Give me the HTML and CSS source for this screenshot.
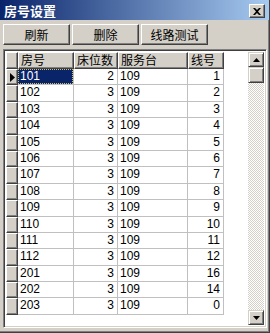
FILE: index.html
```html
<!DOCTYPE html>
<html>
<head>
<meta charset="utf-8">
<link rel="stylesheet" href="styles.css">
</head>
<body>
<div class="window">
  <div class="titlebar">
    <span class="title">房号设置</span>
    <span class="close">
      <svg width="8" height="7" viewBox="0 0 8 7"><path d="M0 0h2l2 2 2-2h2L5 3.5 8 7H6L4 5 2 7H0l3-3.5z" fill="#000"/></svg>
    </span>
  </div>
  <div class="toolbar">
    <div class="btn">刷新</div>
    <div class="btn">删除</div>
    <div class="btn">线路测试</div>
  </div>
  <div class="frame">
    <div class="grid">
      <div class="row head">
        <div class="ind"></div>
        <div class="hc">房号</div>
        <div class="hc">床位数</div>
        <div class="hc">服务台</div>
        <div class="hc">线号</div>
      </div>
      <div class="row"><div class="ind"><svg width="5" height="9" viewBox="0 0 5 9"><path d="M0 0l5 4.5L0 9z" fill="#000"/></svg></div><div class="c sel"><span>101</span></div><div class="c r">2</div><div class="c">109</div><div class="c r">1</div></div>
      <div class="row"><div class="ind"></div><div class="c">102</div><div class="c r">3</div><div class="c">109</div><div class="c r">2</div></div>
      <div class="row"><div class="ind"></div><div class="c">103</div><div class="c r">3</div><div class="c">109</div><div class="c r">3</div></div>
      <div class="row"><div class="ind"></div><div class="c">104</div><div class="c r">3</div><div class="c">109</div><div class="c r">4</div></div>
      <div class="row"><div class="ind"></div><div class="c">105</div><div class="c r">3</div><div class="c">109</div><div class="c r">5</div></div>
      <div class="row"><div class="ind"></div><div class="c">106</div><div class="c r">3</div><div class="c">109</div><div class="c r">6</div></div>
      <div class="row"><div class="ind"></div><div class="c">107</div><div class="c r">3</div><div class="c">109</div><div class="c r">7</div></div>
      <div class="row"><div class="ind"></div><div class="c">108</div><div class="c r">3</div><div class="c">109</div><div class="c r">8</div></div>
      <div class="row"><div class="ind"></div><div class="c">109</div><div class="c r">3</div><div class="c">109</div><div class="c r">9</div></div>
      <div class="row"><div class="ind"></div><div class="c">110</div><div class="c r">3</div><div class="c">109</div><div class="c r">10</div></div>
      <div class="row"><div class="ind"></div><div class="c">111</div><div class="c r">3</div><div class="c">109</div><div class="c r">11</div></div>
      <div class="row"><div class="ind"></div><div class="c">112</div><div class="c r">3</div><div class="c">109</div><div class="c r">12</div></div>
      <div class="row"><div class="ind"></div><div class="c">201</div><div class="c r">3</div><div class="c">109</div><div class="c r">16</div></div>
      <div class="row"><div class="ind"></div><div class="c">202</div><div class="c r">3</div><div class="c">109</div><div class="c r">14</div></div>
      <div class="row"><div class="ind"></div><div class="c">203</div><div class="c r">3</div><div class="c">109</div><div class="c r">0</div></div>
    </div>
    <div class="scrollbar">
      <div class="sbtn"><svg width="7" height="4" viewBox="0 0 7 4"><path d="M3.5 0L7 4H0z" fill="#000"/></svg></div>
      <div class="thumb"></div>
      <div class="track"></div>
      <div class="sbtn"><svg width="7" height="4" viewBox="0 0 7 4"><path d="M0 0h7L3.5 4z" fill="#000"/></svg></div>
    </div>
  </div>
</div>
</body>
</html>
```
FILE: styles.css
```css
* { box-sizing: border-box; }
html, body { margin: 0; padding: 0; }
body {
  width: 270px;
  height: 333px;
  overflow: hidden;
  font-family: "Liberation Sans", "Noto Sans CJK SC", sans-serif;
  font-size: 12px;
  color: #000;
}
.window {
  width: 270px;
  height: 333px;
  background: #d4d0c8;
  border-right: 1px solid #404040;
  border-bottom: 1px solid #404040;
  box-shadow: inset -1px -1px 0 #808080;
  display: flex;
  flex-direction: column;
}
.titlebar {
  height: 20px;
  flex: none;
  background: linear-gradient(to right, #0a246a, #a6caf0);
  display: flex;
  align-items: center;
  justify-content: space-between;
  padding: 0 4px 0 4px;
}
.title {
  color: #fff;
  font-family: "Noto Sans CJK SC", sans-serif;
  font-weight: bold;
  font-size: 13px;
  line-height: 1;
}
.close {
  width: 16px;
  height: 14px;
  background: #d4d0c8;
  border: 1px solid;
  border-color: #fff #404040 #404040 #fff;
  box-shadow: inset -1px -1px 0 #808080;
  display: flex;
  align-items: center;
  justify-content: center;
  margin-top: 2px;
}
.toolbar {
  display: flex;
  flex: none;
  gap: 2px;
  height: 29px;
  padding: 4px 0 0 3px;
}
.btn {
  width: 67px;
  height: 21px;
  background: #d4d0c8;
  border: 1px solid;
  border-color: #fff #404040 #404040 #fff;
  box-shadow: inset -1px -1px 0 #808080;
  display: flex;
  align-items: center;
  justify-content: center;
  font-family: "Noto Sans CJK SC", sans-serif;
  font-size: 12px;
  line-height: 1;
}
.frame {
  flex: none;
  margin-left: 3px;
  width: 264px;
  height: 279px;
  border: 1px solid;
  border-color: #808080 #fff #fff #808080;
  box-shadow: inset 1px 1px 0 #404040, inset -1px -1px 0 #d4d0c8;
  background: #fff;
  padding: 2px;
  display: flex;
  justify-content: space-between;
}
.grid {
  display: flex;
  flex-direction: column;
  width: 219px;
}
.row {
  display: grid;
  grid-template-columns: 12px 56px 44px 70px 36px;
  height: 16.4px;
  flex: none;
}
.row.head { height: 17px; }
.ind {
  background: #d4d0c8;
  border: 1px solid;
  border-color: #fff #404040 #404040 #fff;
  box-shadow: inset -1px -1px 0 #808080;
  display: flex;
  align-items: center;
  justify-content: center;
  padding-left: 1px;
}
.hc {
  background: #d4d0c8;
  border: 1px solid;
  border-color: #fff #404040 #404040 #fff;
  box-shadow: inset -1px -1px 0 #808080;
  font-family: "Noto Sans CJK SC", sans-serif;
  font-size: 12px;
  line-height: 14px;
  padding-left: 2px;
  white-space: nowrap;
  overflow: hidden;
}
.c {
  border-right: 1px solid #c0c0c0;
  border-bottom: 1px solid #c0c0c0;
  padding: 0 2px;
  line-height: 15px;
  white-space: nowrap;
}
.c.r { text-align: right; padding-right: 3px; }
.c.sel { padding: 0; }
.c.sel span {
  display: block;
  height: 100%;
  background: #0a246a;
  color: #fff;
  outline: 1px dotted #d4c060;
  outline-offset: -1px;
  padding-left: 2px;
}
.scrollbar {
  width: 16px;
  display: flex;
  flex-direction: column;
}
.sbtn {
  height: 15px;
  background: #d4d0c8;
  border: 1px solid;
  border-color: #d4d0c8 #404040 #404040 #d4d0c8;
  box-shadow: inset 1px 1px 0 #fff, inset -1px -1px 0 #808080;
  display: flex;
  align-items: center;
  justify-content: center;
  flex: none;
}
.thumb {
  height: 16px;
  background: #d4d0c8;
  border: 1px solid;
  border-color: #d4d0c8 #404040 #404040 #d4d0c8;
  box-shadow: inset 1px 1px 0 #fff, inset -1px -1px 0 #808080;
  flex: none;
}
.track {
  flex: 1;
  background-color: #fff;
  background-image: repeating-conic-gradient(#d4d0c8 0 25%, #fff 0 50%);
  background-size: 2px 2px;
}
```
